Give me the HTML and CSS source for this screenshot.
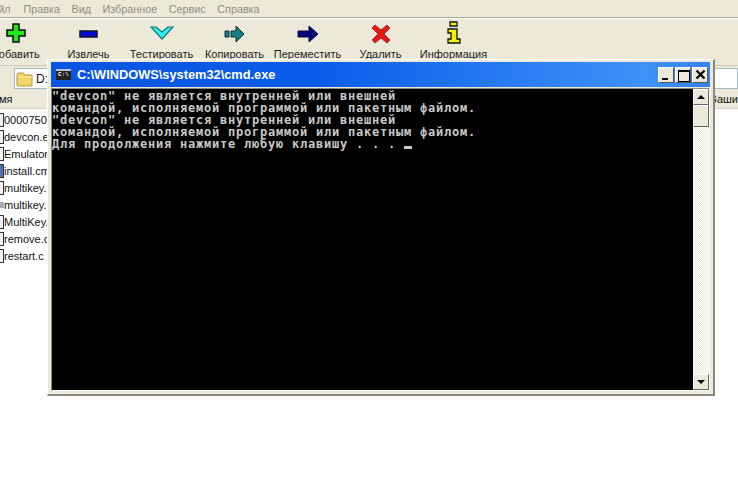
FILE: index.html
```html
<!DOCTYPE html>
<html lang="ru">
<head>
<meta charset="utf-8">
<title>cmd.exe</title>
<link rel="stylesheet" href="styles.css">
</head>
<body>
<div class="app">
  <div class="menu">
    <span class="m-first">Файл</span><span>Правка</span><span>Вид</span><span>Избранное</span><span>Сервис</span><span>Справка</span>
  </div>
  <div class="toolbar">
    <div class="tool">
      <svg width="24" height="24" viewBox="0 0 24 24"><path d="M9 3h6v6h6v6h-6v6H9v-6H3V9h6z" fill="#1fe81f" stroke="#0a0a0a" stroke-width="1.500"/></svg>
      <span>Добавить</span>
    </div>
    <div class="tool">
      <svg width="24" height="24" viewBox="0 0 24 24"><path d="M3 10h17v6H3z" fill="#0808d8" stroke="#10102a" stroke-width="1.500"/></svg>
      <span>Извлечь</span>
    </div>
    <div class="tool">
      <svg width="24" height="24" viewBox="0 0 24 24"><path d="M1 6l5 0 6 5 6-5 5 0-11 12z" fill="#2ff0f0" stroke="#187070" stroke-width="1.200"/></svg>
      <span>Тестировать</span>
    </div>
    <div class="tool">
      <svg width="24" height="24" viewBox="0 0 24 24"><path d="M2 10h4v6H2z" fill="#128080" stroke="#103030"/><path d="M8 10h5V5l8 8-8 8v-5H8z" fill="#128080" stroke="#103030"/></svg>
      <span>Копировать</span>
    </div>
    <div class="tool">
      <svg width="24" height="24" viewBox="0 0 24 24"><path d="M2 10h11V5l9 8-9 8v-5H2z" fill="#08087a" stroke="#0a0a40"/></svg>
      <span>Переместить</span>
    </div>
    <div class="tool">
      <svg width="24" height="24" viewBox="0 0 24 24"><path d="M6 4l6 5 6-5 3 3-6 6 6 6-3 3-6-5-6 5-3-3 6-6-6-6z" fill="#e81818" stroke="#a03030"/></svg>
      <span>Удалить</span>
    </div>
    <div class="tool">
      <svg width="24" height="24" viewBox="0 0 24 24"><path d="M8 1h7v4H8zM6 8h9v10h3v4H6v-4h3v-6H6z" fill="#f4f00c" stroke="#111" stroke-width="1.300"/></svg>
      <span>Информация</span>
    </div>
  </div>
  <div class="address">
    <div class="addr-box">
      <svg width="18" height="16" viewBox="0 0 18 16"><path d="M1 4l1-2h5l2 2h7v10a1 1 0 0 1-1 1H2a1 1 0 0 1-1-1z" fill="#f4d468" stroke="#b89838"/><path d="M2 6h14" stroke="#fff0b0"/></svg>
      <span>D:</span>
    </div>
  </div>
  <div class="head">
    <span>Имя</span><span>Ваши</span>
  </div>
  <ul class="files">
    <li><i class="fi"></i>0000750</li>
    <li><i class="fi"></i>devcon.e</li>
    <li><i class="fi"></i>Emulator</li>
    <li><i class="fi fi-blue"></i>install.cm</li>
    <li><i class="fi"></i>multikey.</li>
    <li><i class="fi fi-gray"></i>multikey.</li>
    <li><i class="fi"></i>MultiKey.</li>
    <li><i class="fi"></i>remove.c</li>
    <li><i class="fi"></i>restart.c</li>
  </ul>
</div>

<div class="cmd">
  <div class="title">
    <span class="cmd-ico">C:\</span>
    <span class="title-text">C:\WINDOWS\system32\cmd.exe</span>
    <span class="btn btn-min"></span>
    <span class="btn btn-max"></span>
    <span class="btn btn-close">
      <svg width="11" height="11" viewBox="0 0 11 11"><path d="M1.500 1.500l8 8M9.500 1.500l-8 8" stroke="#000" stroke-width="2.200"/></svg>
    </span>
  </div>
  <div class="cmd-body">
    <pre class="term">"devcon" не является внутренней или внешней
командой, исполняемой программой или пакетным файлом.
"devcon" не является внутренней или внешней
командой, исполняемой программой или пакетным файлом.
Для продолжения нажмите любую клавишу . . . <b class="cursor"></b></pre>
    <div class="scroll">
      <span class="sb"><i class="tri-up"></i></span>
      <span class="sb thumb"></span>
      <span class="track"></span>
      <span class="sb"><i class="tri-down"></i></span>
    </div>
  </div>
</div>
</body>
</html>
```
FILE: styles.css
```css
* { box-sizing: border-box; }
html, body { margin: 0; height: 100%; background: #fff; overflow: hidden; }
body { position: relative; width: 738px; height: 493px; font-family: "Liberation Sans", sans-serif; font-size: 11px; color: #111; }

.app { width: 738px; overflow: hidden; }

.menu { display: flex; height: 18px; align-items: center; gap: 11.500px; background: #ece9d8; color: #8e8e84; font-size: 10.800px; margin-left: -16px; border-bottom: 1px solid #a8a89c; width: 760px; }
.m-first { width: 28px; }

.toolbar { display: flex; height: 47px; background: #ece9d8; border-top: 1px solid #fff; margin-left: -21px; width: 760px; }
.tool { width: 73px; display: flex; flex-direction: column; align-items: center; padding-top: 2px; white-space: nowrap; font-size: 11px; color: #222; }
.tool svg { display: block; margin-bottom: 3px; }

.address { height: 25px; background: #ece9d8; border-top: 1px solid #cfccbc; padding: 2px 0 1px 14px; }
.addr-box { display: flex; align-items: center; gap: 2px; height: 100%; background: #fff; border: 1px solid #a8b8cc; padding-left: 1px; font-size: 12px; }

.head { display: flex; justify-content: space-between; height: 19px; background: #ece9d8; align-items: center; margin-left: -9px; font-size: 11px; border-bottom: 1px solid #d8d4c4; width: 747px; }

.files { list-style: none; margin: 0; padding: 2px 0 0; width: 47px; overflow: hidden; background: #fff; }
.files li { display: flex; align-items: center; height: 17px; font-size: 11px; white-space: nowrap; }
.fi { flex: none; display: block; width: 4px; height: 14px; border: 1px solid #333; border-left: 0; background: #f0f0f0; }
.fi-blue { background: #5070b0; }
.fi-gray { background: #aaa; height: 6px; border: 0; }

.cmd { position: absolute; left: 47px; top: 59px; width: 668px; height: 337px; background: #ece9d8; border: 1px solid #fff; border-right: 2px solid #8a887c; border-bottom: 2px solid #8a887c; padding: 2px 3px 3px 3px; display: flex; flex-direction: column; }
.title { height: 25px; flex: none; display: flex; align-items: center; background: linear-gradient(90deg, #0a55e0 0%, #0a5ce8 40%, #3d92f8 90%, #3480ee 100%); padding: 0 2px 0 5px; color: #fff; }
.cmd-ico { width: 15px; height: 11px; background: #222; border-top: 2px solid #b8c0d8; color: #fff; font: bold 6px/8px "Liberation Mono", monospace; text-align: center; overflow: hidden; margin-right: 6px; }
.title-text { flex: 1; font: bold 12.800px "Liberation Sans", sans-serif; }
.btn { width: 16px; height: 16px; margin-left: 1px; background: #ece9d8; border: 1px solid; border-color: #fff #555 #555 #fff; display: flex; align-items: center; justify-content: center; position: relative; }
.btn-min::after { content: ""; position: absolute; left: 3px; bottom: 2px; width: 6px; height: 2px; background: #000; }
.btn-max::after { content: ""; position: absolute; left: 2px; top: 2px; width: 10px; height: 9px; border: 1px solid #000; border-top-width: 2px; }

.cmd-body { flex: 1; display: flex; margin-top: 1px; border: 1px solid; border-color: #8a887c #fff #fff #8a887c; min-height: 0; }
.term { flex: 1; margin: 0; background: #000; color: #c8c8c8; font: bold 12px/12px "DejaVu Sans Mono", monospace; letter-spacing: 0.776px; padding: 1px 0 0 0; overflow: hidden; white-space: pre; }
.cursor { display: inline-block; width: 8px; height: 3px; background: #c8c8c8; vertical-align: -1px; }
.scroll { width: 16px; flex: none; display: flex; flex-direction: column; background-image: repeating-conic-gradient(#ece9d8 0 25%, #fff 0 50%); background-size: 2px 2px; }
.sb { width: 16px; height: 16px; flex: none; background: #ece9d8; border: 1px solid; border-color: #fff #666 #666 #fff; display: flex; align-items: center; justify-content: center; }
.thumb { height: 22px; }
.track { flex: 1; }
.tri-up { width: 0; height: 0; border: 4px solid transparent; border-top: 0; border-bottom-color: #000; }
.tri-down { width: 0; height: 0; border: 4px solid transparent; border-bottom: 0; border-top-color: #000; }
```
